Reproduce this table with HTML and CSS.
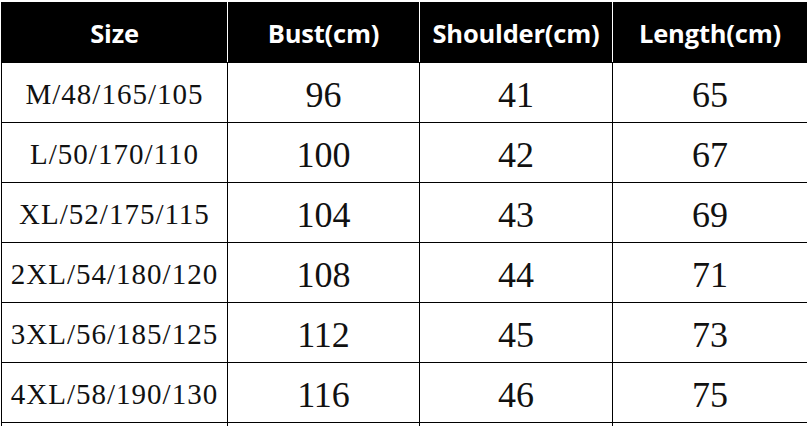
FILE: index.html
```html
<!DOCTYPE html>
<html>
<head>
<meta charset="utf-8">
<link rel="stylesheet" href="styles.css">
</head>
<body>
<div class="wrap">
<table class="size-table">
  <colgroup>
    <col class="c1"><col class="c2"><col class="c3"><col class="c4">
  </colgroup>
  <thead>
    <tr><th>Size</th><th>Bust(cm)</th><th>Shoulder(cm)</th><th>Length(cm)</th></tr>
  </thead>
  <tbody>
    <tr><td class="sz">M/48/165/105</td><td>96</td><td>41</td><td>65</td></tr>
    <tr><td class="sz">L/50/170/110</td><td>100</td><td>42</td><td>67</td></tr>
    <tr><td class="sz">XL/52/175/115</td><td>104</td><td>43</td><td>69</td></tr>
    <tr><td class="sz">2XL/54/180/120</td><td>108</td><td>44</td><td>71</td></tr>
    <tr><td class="sz">3XL/56/185/125</td><td>112</td><td>45</td><td>73</td></tr>
    <tr><td class="sz">4XL/58/190/130</td><td>116</td><td>46</td><td>75</td></tr>
    <tr><td class="sz"></td><td></td><td></td><td></td></tr>
  </tbody>
</table>
</div>
</body>
</html>
```

FILE: styles.css
```css
html, body {
  margin: 0;
  padding: 0;
  background: #fff;
  overflow: hidden;
  height: 426px;
}
.wrap {
  padding: 2px 0 0 1px;
}
.size-table {
  border-collapse: collapse;
  table-layout: fixed;
  width: 806px;
}
.c1 { width: 226px; }
.c2 { width: 192px; }
.c3 { width: 193px; }
.c4 { width: 195px; }
.size-table th {
  height: 59px;
  padding: 0;
  background: #000;
  color: #fff;
  font-family: "Open Sans", "Noto Sans", sans-serif;
  font-weight: 700;
  font-size: 25.5px;
  letter-spacing: -0.2px;
  text-align: center;
  vertical-align: middle;
  border: 1px solid #000;
  border-right: 1px solid #fff;
}
.size-table th:last-child {
  border-right: 1px solid #000;
}
.size-table td {
  height: 60px;
  padding: 0;
  padding-top: 5px;
  border: 1px solid #000;
  text-align: center;
  vertical-align: middle;
  color: #111;
  font-family: "Liberation Serif", "Times New Roman", serif;
  font-size: 36px;
  box-sizing: border-box;
}
.size-table td.sz {
  font-size: 29px;
  letter-spacing: 1px;
  padding-top: 3px;
}
```
